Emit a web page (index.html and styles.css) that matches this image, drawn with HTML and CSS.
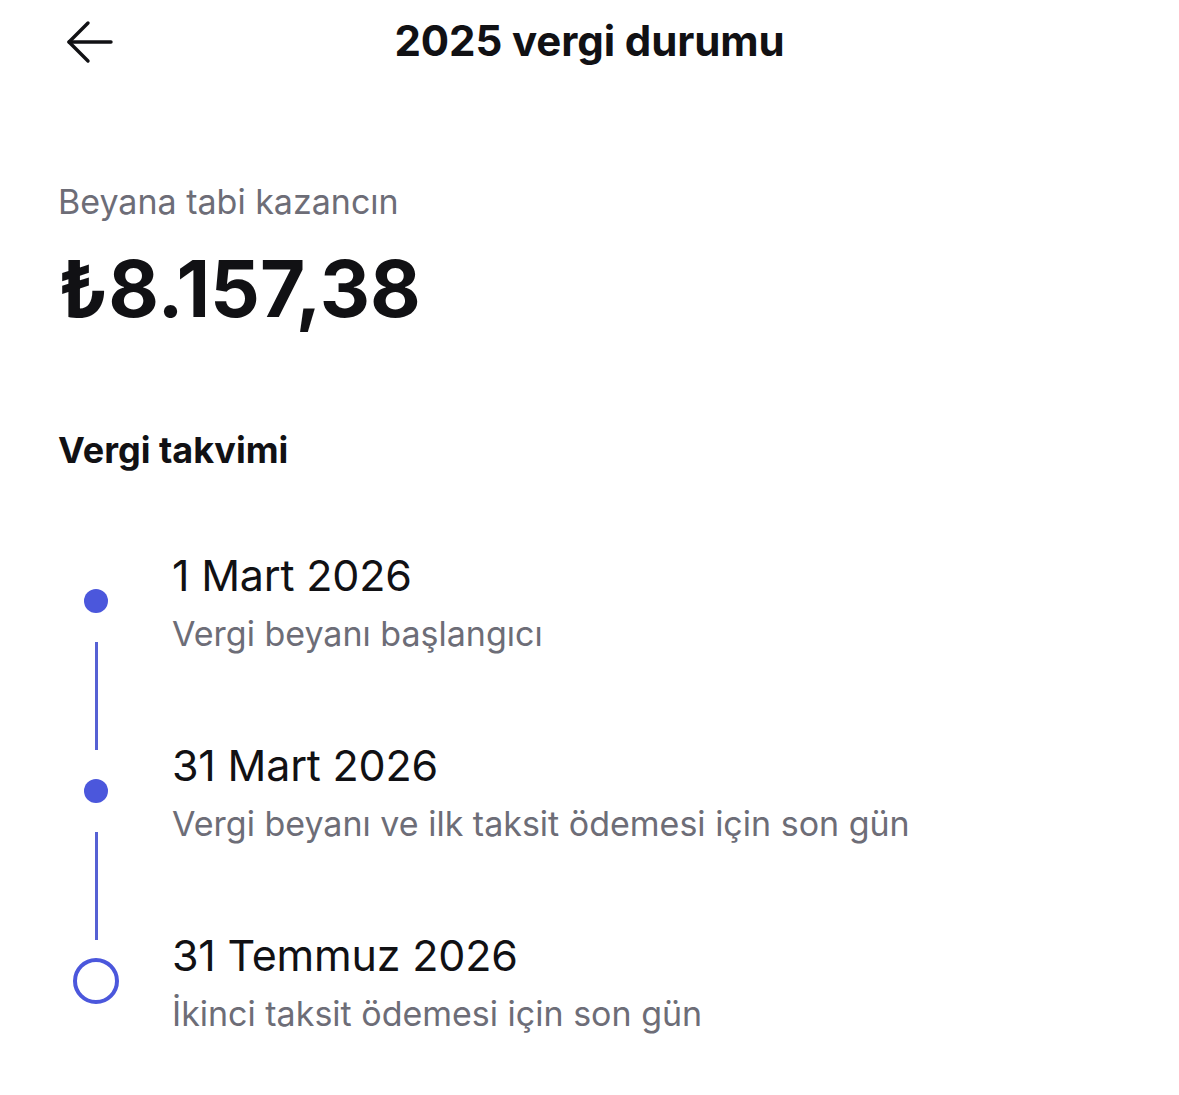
FILE: index.html
```html
<!DOCTYPE html>
<html lang="tr">
<head>
  <meta charset="UTF-8" />
  <meta name="viewport" content="width=device-width, initial-scale=1.0"/>
  <title>2025 vergi durumu</title>
  <link rel="stylesheet" href="styles.css">
</head>
<body>
  <header class="topbar">
    <button class="back-btn" aria-label="Geri">
      <svg width="48" height="44" viewBox="0 0 48 44" fill="none" stroke="currentColor" stroke-width="3.4" stroke-linecap="round" stroke-linejoin="round">
        <path d="M45 22H3"/>
        <path d="M22 3L3 22l19 19"/>
      </svg>
    </button>
    <h1>2025 vergi durumu</h1>
    <span class="spacer"></span>
  </header>

  <main>
    <section class="summary">
      <p class="label">Beyana tabi kazancın</p>
      <p class="amount">₺8.157,38</p>
    </section>

    <section class="calendar">
      <h2>Vergi takvimi</h2>
      <ol class="timeline">
        <li class="step">
          <div class="marker"><span class="dot"></span><span class="line"></span></div>
          <div class="step-text">
            <p class="date">1 Mart 2026</p>
            <p class="desc">Vergi beyanı başlangıcı</p>
          </div>
        </li>
        <li class="step">
          <div class="marker"><span class="dot"></span><span class="line"></span></div>
          <div class="step-text">
            <p class="date">31 Mart 2026</p>
            <p class="desc">Vergi beyanı ve ilk taksit ödemesi için son gün</p>
          </div>
        </li>
        <li class="step last">
          <div class="marker"><span class="dot open"></span></div>
          <div class="step-text">
            <p class="date">31 Temmuz 2026</p>
            <p class="desc">İkinci taksit ödemesi için son gün</p>
          </div>
        </li>
      </ol>
    </section>
  </main>
</body>
</html>
```

FILE: styles.css
```css
:root {
  --text: #111114;
  --muted: #6d6d77;
  --accent: #4b57dc;
  --line: #5661d4;
}
* {
  box-sizing: border-box;
}
body {
  margin: 0;
  font-family: Inter, "Noto Sans", sans-serif;
  color: var(--text);
  background: #fff;
}
p, h1, h2, ol {
  margin: 0;
  padding: 0;
}
.topbar {
  display: grid;
  grid-template-columns: 1fr auto 1fr;
  align-items: center;
  height: 84px;
  padding: 0 66px;
}
.back-btn {
  justify-self: start;
  background: none;
  border: none;
  padding: 0;
  color: var(--text);
  display: flex;
}
.topbar h1 {
  font-size: 42px;
  font-weight: 700;
  letter-spacing: -0.1px;
  line-height: 48px;
  margin-top: -2px;
}
main {
  padding: 0 58px;
}
.summary {
  padding-top: 96px;
}
.label {
  font-size: 34px;
  line-height: 44px;
  color: var(--muted);
}
.amount {
  font-size: 78px;
  font-weight: 700;
  line-height: 90px;
  margin-top: 20px;
}
.calendar h2 {
  font-size: 36px;
  font-weight: 700;
  line-height: 44px;
  margin-top: 94px;
}
.timeline {
  list-style: none;
  margin-top: 78px;
}
.step {
  display: grid;
  grid-template-columns: 76px 1fr;
  gap: 38px;
  height: 190px;
}
.marker {
  display: flex;
  flex-direction: column;
  align-items: center;
  padding-top: 39px;
}
.dot {
  width: 24px;
  height: 24px;
  border-radius: 50%;
  background: var(--accent);
  flex: none;
}
.dot.open {
  width: 46px;
  height: 46px;
  margin-top: -11px;
  background: #fff;
  border: 4px solid var(--accent);
}
.line {
  width: 3px;
  flex: 1;
  margin-top: 29px;
  margin-bottom: -10px;
  background: var(--line);
}
.date {
  font-size: 43px;
  line-height: 50px;
  letter-spacing: -0.2px;
}
.desc {
  font-size: 34px;
  line-height: 44px;
  color: var(--muted);
  margin-top: 12px;
}
```
